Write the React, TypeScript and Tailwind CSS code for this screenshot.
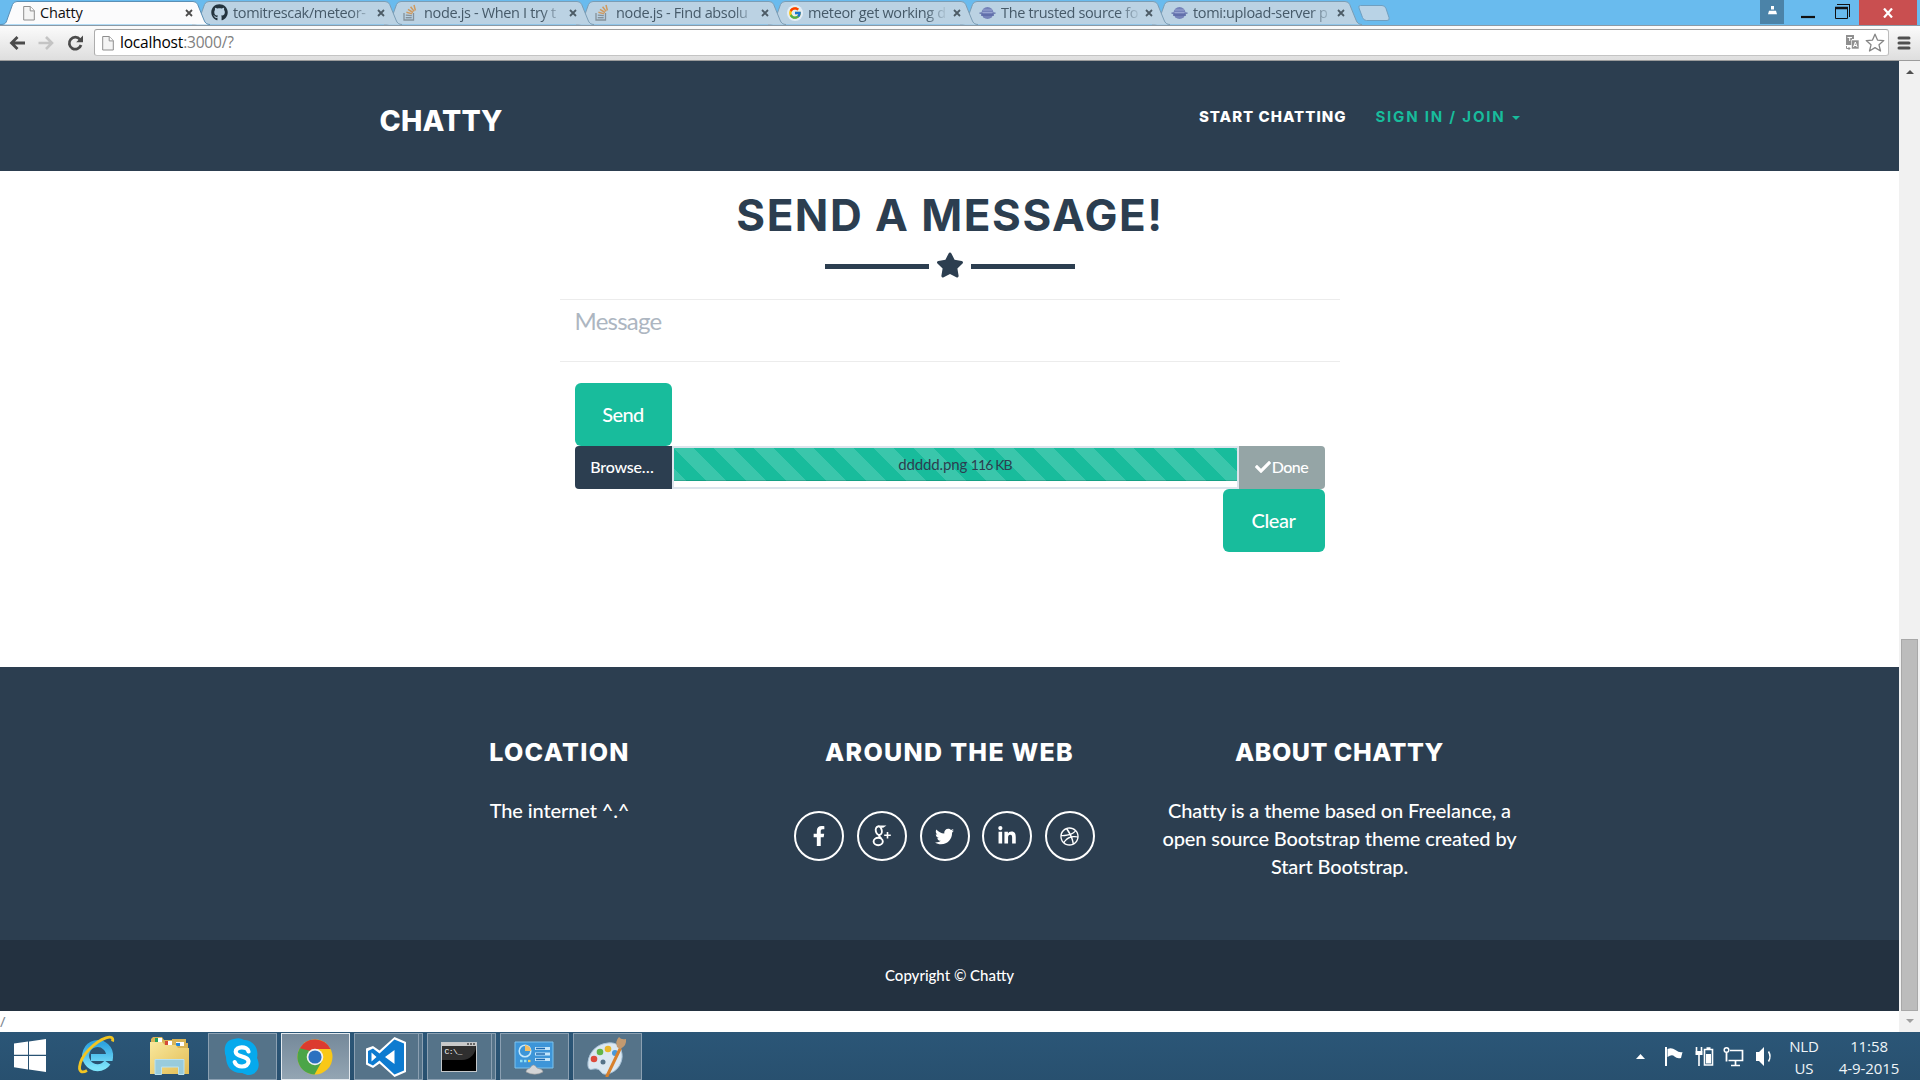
import React from "react";
import { FaCheck, FaDribbble, FaFacebookF, FaGithub, FaLinkedinIn, FaStar, FaTwitter } from "react-icons/fa";
import { FcGoogle } from "react-icons/fc";

const ui = "font-['Open_Sans',sans-serif]";
const heading = "font-['Inter',sans-serif] font-extrabold uppercase whitespace-nowrap";

function PageIcon() {
  return (
    <svg width="12" height="16" viewBox="0 0 12 16" className="shrink-0">
      <path d="M.7 1.5h6.6l4 4.2v9.3H.7z" fill="#f4f4f4" stroke="#8e8e8e" />
      <path d="M7.2 1.5v4.4h4" fill="#fff" stroke="#8e8e8e" />
    </svg>
  );
}

function StackIcon() {
  return (
    <svg width="14" height="17" viewBox="0 0 14 17" fill="none" className="mr-[2px] shrink-0">
      <path d="M1 9v7h9.500V9" stroke="#84919b" strokeWidth="1.300" />
      <path d="M2.700 13.700h6" stroke="#84919b" strokeWidth="1.400" />
      <path d="M2.800 11.200l6 .4" stroke="#84919b" strokeWidth="1.300" />
      <path d="M3.400 8.300l5.800 1.600M5 5.300l5 3.200M7.600 2.700l3.500 4.700M11 1l1.400 5.500" stroke="#cf9a5f" strokeWidth="1.500" />
    </svg>
  );
}

function AtmosphereIcon() {
  return (
    <svg width="17" height="14" viewBox="0 0 17 14" className="shrink-0">
      <circle cx="8.500" cy="7" r="6" fill="#7482b9" />
      <path d="M4 4h9M3 6.500h11" stroke="#98a4d1" />
      <path d="M.5 7.200h3M13.500 7.200h3M2 9h13" stroke="#5c6aa6" strokeWidth="1.300" />
    </svg>
  );
}

const tabs = [
  { title: "Chatty", icon: <PageIcon /> },
  { title: "tomitrescak/meteor-", icon: <FaGithub size={17} color="#24343f" className="shrink-0" /> },
  { title: "node.js - When I try t", icon: <StackIcon /> },
  { title: "node.js - Find absolu", icon: <StackIcon /> },
  { title: "meteor get working d", icon: <span className="shrink-0 rounded-full bg-[#e3edf5] p-px"><FcGoogle size={14} /></span> },
  { title: "The trusted source fo", icon: <AtmosphereIcon /> },
  { title: "tomi:upload-server p", icon: <AtmosphereIcon /> },
];

const depth = ["z-[7]", "z-[6]", "z-[5]", "z-[4]", "z-[3]", "z-[2]", "z-[1]"];

function Tab({ index }: { index: number }) {
  const active = index === 0;
  const { title, icon } = tabs[index];
  return (
    <div className={`relative h-[25px] w-[192px] shrink-0 ${depth[index]}`}>
      <svg width="212" height="25" viewBox="0 0 212 25" className="absolute left-0 top-0">
        <path
          d="M0 24.500C6 24.500 6 23 8 17L12.500 4.500Q13.800 1.500 17 1.500H193Q196.500 1.500 197.700 4.500L204 20Q205.500 24.500 210 24.500"
          fill={active ? "#fbfbfc" : "#bbd2e3"}
          stroke={active ? "#5b8fb5" : "#7b9db5"}
        />
      </svg>
      <div className={`relative flex h-[25px] items-center ${active ? "pl-[23px]" : "pl-[19px]"}`}>
        {icon}
        <div
          className={`ml-[5px] whitespace-nowrap text-[14.500px] leading-[22px] ${ui} ${active ? "tracking-[-0.2px] text-[#111]" : "w-[140px] tracking-[-0.35px] text-[#465a69] [mask-image:linear-gradient(90deg,#000_84%,transparent_100%)]"}`}
        >
          {title}
        </div>
      </div>
      <svg width="8" height="8" viewBox="0 0 8 8" className="absolute left-[185px] top-[9px]">
        <path d="M1 1l6 6M7 1L1 7" stroke={active ? "#4c4c4c" : "#4c5b66"} strokeWidth="1.800" />
      </svg>
    </div>
  );
}

function TitleBar() {
  return (
    <div className="flex h-[25px] bg-[#69bbee]">
      {tabs.map((t, i) => (
        <Tab key={t.title} index={i} />
      ))}
      <svg width="36" height="25" viewBox="0 0 36 25" className="ml-[13px] mr-auto">
        <path d="M3.500 5.500H25q3 0 4 3l3 9q1 3-2 3H9.500q-3 0-4-3L2 8q-1-2.500 1.500-2.500z" fill="#b9d3e6" stroke="#6f9fc0" />
      </svg>
      <div className="flex h-[24px] w-[24px] justify-center bg-[#4b83a8] pt-[6px]">
        <svg width="9" height="9" viewBox="0 0 9 9" fill="#fff">
          <path d="M3 0h3v3.500H3zM1 4.700h7l1 3.600H0z" />
        </svg>
      </div>
      <svg width="75" height="24" viewBox="0 0 75 24" fill="none" stroke="#111">
        <path d="M17 17h14" strokeWidth="2.200" />
        <path d="M51.500 7.500h12v11h-12z" />
        <path d="M51 8h13" strokeWidth="2.500" />
        <path d="M53.500 5V4.500h12V17M53 4.500h13" />
      </svg>
      <div className="flex h-[25px] w-[58px] items-center justify-center bg-[#c94f50]">
        <svg width="10" height="10" viewBox="0 0 10 10">
          <path d="M1 0.500l8 9M9 .5l-8 9" stroke="#fff" strokeWidth="2.200" />
        </svg>
      </div>
      <div className="w-[3px]" />
    </div>
  );
}

function Toolbar() {
  return (
    <div className="flex h-[36px] items-center border-b border-t border-b-[#9c9c9c] border-t-[#8b9aa6] bg-linear-to-b from-[#fbfbfb] to-[#dedede] pb-px">
      <svg width="94" height="34" viewBox="0 0 94 34" fill="none" className="shrink-0">
        <path d="M25 17H12M17.500 11l-6 6 6 6" stroke="#4b4b4b" strokeWidth="2.800" />
        <path d="M38.500 17h13M46 11l6 6-6 6" stroke="#c4c4c4" strokeWidth="2.600" />
        <path d="M80 13.500A6 6 0 1 0 81 19" stroke="#4b4b4b" strokeWidth="2.700" />
        <path d="M83 9.500v6.800h-6.800z" fill="#4b4b4b" />
      </svg>
      <div className="flex h-[27px] w-[1795px] items-center rounded-[3px] border border-b-[#c4c4c4] border-l-[#adadad] border-r-[#bcbcbc] border-t-[#9f9f9f] bg-white pl-[7px] pr-[3px]">
        <PageIcon />
        <div className={`ml-[6px] pb-px text-[15.500px] leading-[22px] tracking-[-0.2px] text-[#808080] ${ui}`}>
          <span className="text-black">localhost</span>:3000/?
        </div>
        <svg width="15" height="15" viewBox="0 0 15 15" className="ml-auto">
          <path d="M1 0h8v4H7v6H1z" fill="#8f8f8f" />
          <path d="M6.500 5H14v9H6.500z" fill="#8f8f8f" stroke="#fff" strokeWidth=".6" />
          <path d="M2.500 2.500h4.500M4.700 2.500V6" stroke="#fff" />
          <path d="M8.500 12l1.800-5 1.800 5M9 10.500h2.700" stroke="#fff" fill="none" />
          <path d="M1.500 11v2.500H5M3.500 12l1.500 1.500L3.500 15" stroke="#8f8f8f" fill="none" />
        </svg>
        <svg width="20" height="19" viewBox="0 0 20 19" className="ml-[5px]">
          <path d="M10 1.200l2.500 5.900 6.300.5-4.800 4.200 1.500 6.200-5.500-3.400L4.500 18 6 11.800 1.200 7.600l6.300-.5z" fill="#fff" stroke="#858585" strokeWidth="1.300" strokeLinejoin="round" />
        </svg>
      </div>
      <svg width="14" height="14" viewBox="0 0 14 14" className="ml-[8px]">
        <path d="M2 2h10M2 7h10M2 12h10" stroke="#505050" strokeWidth="3" strokeLinecap="round" />
      </svg>
    </div>
  );
}

function GooglePlusGlyph() {
  return (
    <svg width="20" height="22" viewBox="0 0 20 22" fill="none" stroke="#fff">
      <ellipse cx="6.800" cy="5.700" rx="3" ry="4.300" strokeWidth="1.900" transform="rotate(-12 6.800 5.700)" />
      <path d="M6 1.100h6.500l-1.500 1H9" strokeWidth="1.200" />
      <path d="M7.500 9.900c-1 1.300.2 2.200 1.600 3.400" strokeWidth="2.100" />
      <ellipse cx="6.200" cy="16.500" rx="4.600" ry="3.700" strokeWidth="1.900" />
      <path d="M15.500 7v6.600M12.200 10.300h6.600" strokeWidth="1.600" />
    </svg>
  );
}

function Social({ children }: { children: React.ReactNode }) {
  return <a className="flex h-[50px] w-[50px] items-center justify-center rounded-full border-2 border-white text-white">{children}</a>;
}

function SiteHeader() {
  return (
    <header className="flex h-[110px] justify-center bg-[#2c3e50]">
      <div className="flex w-[1140px] justify-between">
        <div className={`${heading} pt-[42px] text-[28.500px] leading-[36px] tracking-[0.2px] text-white`}>Chatty</div>
        <nav className="flex pt-[45px] text-[15px] leading-[21px]">
          <a className={`${heading} mr-[29px] tracking-[1px] text-white`}>Start Chatting</a>
          <a className={`${heading} tracking-[1.800px] text-[#18bc9c] !font-bold`}>Sign in / Join</a>
          <span className="ml-[6px] mt-[10px] h-0 w-0 border-x-4 border-t-4 border-x-transparent border-t-[#18bc9c]" />
        </nav>
      </div>
    </header>
  );
}

function MessageSection() {
  return (
    <section className="flex h-[496px] flex-col items-center bg-white">
      <h2 className={`${heading} mt-[17px] h-[54px] pl-px text-[44px] !font-bold leading-[54px] tracking-[1.500px] text-[#2c3e50]`}>Send a message!</h2>
      <div className="mt-[9px] flex h-[28px] items-center gap-[7px] text-[#2c3e50]">
        <div className="mt-[3px] h-[5px] w-[104px] bg-[#2c3e50]" />
        <FaStar size={28} />
        <div className="mt-[3px] h-[5px] w-[104px] bg-[#2c3e50]" />
      </div>
      <div className="mt-[20px] h-[63px] w-[780px] border-y border-[#ececec] pl-[15px] pt-[3px] font-['Lato',sans-serif] text-[24px] leading-[36px] tracking-[-0.75px] text-[#adb6c1]">
        Message
      </div>
      <div className="mt-[21px] flex w-[750px] flex-col font-['Lato',sans-serif] text-white">
        <button className="h-[63px] w-[97px] rounded-[6px] bg-[#18bc9c] pb-[2px] text-[20px] font-medium tracking-[-0.6px]">Send</button>
        <div className="flex h-[43px] w-full">
          <div className="flex w-[97px] items-center justify-center rounded-l-[4px] bg-[#2c3e50] pb-px pr-[2px] text-[16px] font-medium tracking-[-0.200px]">Browse…</div>
          <div className="flex-1 border-2 border-[#dce4ec]">
            <div className="flex h-[33px] items-center justify-center bg-[#18bc9c] bg-[linear-gradient(45deg,rgba(255,255,255,.15)_25%,transparent_25%,transparent_50%,rgba(255,255,255,.15)_50%,rgba(255,255,255,.15)_75%,transparent_75%)] bg-[length:40px_40px] text-[15px] tracking-[-0.15px] text-[#2c3e50] shadow-[inset_0_-1px_0_rgba(0,0,0,.15)]">
              ddddd.png&nbsp;<span className="text-[14px] tracking-[-0.900px]">116 KB</span>
            </div>
          </div>
          <div className="flex w-[86px] items-center justify-center gap-px rounded-r-[4px] bg-[#95a5a6] pb-px text-[16px] font-medium tracking-[-0.500px]">
            <FaCheck size={16} />
            Done
          </div>
        </div>
        <button className="h-[63px] w-[102px] self-end rounded-[6px] bg-[#18bc9c] pb-[2px] text-[20px] font-medium tracking-[-0.400px]">Clear</button>
      </div>
    </section>
  );
}

function SiteFooter() {
  const title = `${heading} text-[25px] leading-[30px]`;
  return (
    <footer className="text-center font-['Lato',sans-serif] text-white">
      <div className="flex h-[273px] justify-center bg-[#2c3e50] pt-[70px] text-[20px] font-medium leading-[28px] tracking-[-0.110px]">
        <div className="w-[390px]">
          <h3 className={`${title} tracking-[1.300px]`}>Location</h3>
          <p className="mt-[29px]">The internet ^.^</p>
        </div>
        <div className="w-[390px]">
          <h3 className={`${title} tracking-[1.300px]`}>Around the Web</h3>
          <div className="mt-[44px] flex justify-center gap-[12.700px] pr-[10px]">
            <Social><FaFacebookF size={20} /></Social>
            <Social><GooglePlusGlyph /></Social>
            <Social><FaTwitter size={19} /></Social>
            <Social><FaLinkedinIn size={20} /></Social>
            <Social><FaDribbble size={19} /></Social>
          </div>
        </div>
        <div className="w-[390px] px-[15px]">
          <h3 className={`${title} tracking-[0.500px]`}>About Chatty</h3>
          <p className="mt-[29px]">
            Chatty is a theme based on Freelance, a
            <br />
            open source Bootstrap theme created by
            <br />
            Start Bootstrap.
          </p>
        </div>
      </div>
      <div className="flex h-[71px] items-center justify-center bg-[#233140] text-[15px] font-medium">Copyright © Chatty</div>
      <div className={`h-[21px] bg-white text-left text-[15px] leading-[20px] text-[#7d8791] ${ui}`}>/</div>
    </footer>
  );
}

function Scrollbar() {
  return (
    <div className="flex w-[21px] flex-col items-center justify-between bg-[#f1f1f1]">
      <div className="mt-[9px] h-0 w-0 border-x-[4px] border-b-[4px] border-x-transparent border-b-[#505050]" />
      <div className="mb-[9px] flex flex-col items-center gap-[8px]">
        <div className="h-[372px] w-[17px] border border-[#a8a8a8] bg-[#bcbcbc]" />
        <div className="h-0 w-0 border-x-[4px] border-t-[4px] border-x-transparent border-t-[#a0a0a0]" />
      </div>
    </div>
  );
}

function TaskButton({ children, variant = "plain" }: { children: React.ReactNode; variant?: "plain" | "active" | "stack" }) {
  const look =
    variant === "active"
      ? "border-[#e3e9ee] bg-linear-to-b from-[#75899a] to-[#93a5b3]"
      : "border-[#8ba0b2] bg-[#557389]";
  return (
    <div className="mr-[4px] flex h-[47px] w-[69px]">
      <div className={`flex flex-1 items-center justify-center border pr-[2px] ${look}`}>{children}</div>
      {variant === "stack" && <div className="w-[4px] border-y border-r border-[#8ba0b2] bg-[#557389]" />}
    </div>
  );
}

function ChromeIcon() {
  return (
    <svg width="36" height="36" viewBox="0 0 36 36">
      <circle cx="18" cy="18" r="17.500" fill="#f9c817" />
      <path d="M18 18L2.800 9.200A17.500 17.500 0 0 0 17.500 35.500L25 22z" fill="#4ba547" />
      <path d="M18 18L2.800 9.300A17.500 17.500 0 0 1 33.500 10H18z" fill="#dc3b2f" />
      <path d="M2.800 9.300L10.500 22 14 12z" fill="#4ba547" />
      <circle cx="18" cy="18" r="8.300" fill="#f3f3f3" />
      <circle cx="18" cy="18" r="6.600" fill="#2c71c0" />
    </svg>
  );
}

function Taskbar() {
  return (
    <div className="flex h-[48px] items-start bg-linear-to-b from-[#2b5677] to-[#28506f]">
      <svg width="208" height="48" viewBox="0 0 208 48" className="shrink-0">
        <defs>
          <linearGradient id="ie" x1="0" y1="0" x2="0" y2="1">
            <stop offset="0" stopColor="#2fa4e0" />
            <stop offset="1" stopColor="#7de4fb" />
          </linearGradient>
          <linearGradient id="folder" x1="0" y1="0" x2="1" y2="1">
            <stop offset="0" stopColor="#f9e89d" />
            <stop offset="1" stopColor="#e2bd55" />
          </linearGradient>
        </defs>
        <path d="M14 11.500l14-2v13.300H14zM29 9.400l17-2.400v15.800H29zM14 24h14v13.500l-14-2.200zM29 24h17v16l-17-2.500z" fill="#fff" />
        <path d="M107.500 30.500A12 12 0 1 1 109.500 25.500H91" fill="none" stroke="url(#ie)" strokeWidth="7" />
        <path d="M87 38.500c-11 6-9.500-9 2-21S115 1 112.500 9.500" fill="none" stroke="#f2c522" strokeWidth="2.800" />
        <path d="M151 7l2-2h9l2 3h8V7h14v4h2v28h-37z" fill="#d9b456" />
        <path d="M155 6h7v5h-7zM165 9h7v4h-7zM176 10h8v4h-8z" fill="#fff" />
        <path d="M155 6h3v4h-3z" fill="#27a058" />
        <path d="M165 9h3v4h-3z" fill="#d64a35" />
        <path d="M176 11h4v3h-4z" fill="#2689d8" />
        <path d="M150 10h12l3 3h11l2 3h11v26h-39z" fill="url(#folder)" />
        <path d="M155 27.500h29v15h-5.500v-7.500h-17v7.500H155z" fill="#8fcbe8" fillOpacity=".9" stroke="#b9e2f2" />
      </svg>
      <div className="flex pt-px">
        <TaskButton>
          <svg width="36" height="38" viewBox="0 0 36 38">
            <path d="M10 1C17-1 18 2 21 2c9 1 14 9 12 18 4 8 1 16-8 17-4 0-5-2-8-2C7 35 2 28 2 19-1 11 1 2 10 1z" fill="#06a9ec" />
            <path d="M24.500 13.500C23.500 7.800 11.500 8 11.700 13.800c.2 6 12.800 3.400 12.800 9.800 0 6.200-12.200 6.700-13.800.5" fill="none" stroke="#fff" strokeWidth="4.200" strokeLinecap="round" />
          </svg>
        </TaskButton>
        <TaskButton variant="active"><ChromeIcon /></TaskButton>
        <TaskButton variant="stack">
          <svg width="40" height="40" viewBox="0 0 40 40">
            <path d="M28.500 0L40 5v30l-11.500 5L13.500 26.500 7 31l-7-3.500v-16L7 9l6.500 4.500z" fill="#fff" />
            <path d="M28.500 2.500L38 6.500v27l-9.500 4L13.500 23.500 7 28.500l-5-2.500V14l5-2.500 6.500 5z" fill="#0d7bd0" />
            <path d="M28.500 13l-9.500 7 9.500 7zM5.500 15.500v9l5-4.500z" fill="#fff" />
          </svg>
        </TaskButton>
        <TaskButton variant="stack">
          <div className="h-[30px] w-[36px] border border-[#c4c8cb] bg-black">
            <div className="flex h-[3px] justify-end gap-px bg-[#c9c9c9] pr-px">
              <span className="h-[2px] w-[2px] bg-[#666]" />
              <span className="h-[2px] w-[2px] bg-[#666]" />
              <span className="h-[2px] w-[2px] bg-[#666]" />
            </div>
            <div className="h-[14px] rounded-br-full bg-[#2f2f2f] pl-[3px] pt-px font-['Liberation_Mono',monospace] text-[8px] leading-[10px] tracking-[-0.5px] text-white">C:\_</div>
          </div>
        </TaskButton>
        <TaskButton>
          <svg width="40" height="36" viewBox="0 0 40 36">
            <path d="M1 3h38v26H1z" fill="#3d95d8" stroke="#7cc3ee" />
            <circle cx="11" cy="12" r="5.800" fill="none" stroke="#c4e7fb" strokeWidth="1.500" />
            <path d="M11 12V6a6 6 0 0 1 6 6z" fill="#f2bd64" />
            <path d="M21 9.500h15M21 15h15M21 20.500h15" stroke="#c4e6fb" strokeWidth="3.200" />
            <path d="M22 9.500h9M22 15h9M22 20.500h9" stroke="#1e6ab0" strokeWidth="1.500" />
            <path d="M6 22h2.500M10 22h2.500" stroke="#8fe0f5" strokeWidth="2.300" />
            <path d="M14 22h2.500" stroke="#f4cd55" strokeWidth="2.300" />
            <path d="M12 33q0-3 4-4 3.500-6 7 0 6 1 6 4-8 4.500-17 0z" fill="#d3d5d7" stroke="#999" strokeWidth=".6" />
          </svg>
        </TaskButton>
        <TaskButton>
          <svg width="42" height="40" viewBox="0 0 42 40">
            <path d="M22 6C9 7 1 18 2 29c1 6 5 2 9 3 5 1 3 6 10 5 11-2 16-12 15-20C35 9 30 5 22 6z" fill="#dbe8f2" stroke="#a8c3d8" />
            <circle cx="8" cy="22" r="3.300" fill="#dc4b3d" />
            <circle cx="14" cy="15" r="3.300" fill="#62b548" />
            <circle cx="22" cy="12" r="3.300" fill="#eab72a" />
            <circle cx="29" cy="16" r="3" fill="#4b98d7" />
            <circle cx="17" cy="25" r="2.500" fill="#557389" />
            <path d="M34 12L21 39" stroke="#d8812d" strokeWidth="3" strokeLinecap="round" />
            <path d="M31 10q-2-6 2-10 2 3 7 2 1 7-6 10z" fill="#c39a70" />
          </svg>
        </TaskButton>
      </div>
      <svg width="150" height="48" viewBox="0 0 150 48" fill="none" stroke="#fff" className="ml-auto">
        <path d="M6 27l4.500-5 4.500 5z" fill="#fff" stroke="none" />
        <path d="M36 15v19" strokeWidth="2" />
        <path d="M37.500 17q4-2 8 1t7 2l-1.500 6q-4 1-6.500-1.500T37.500 25z" fill="#fff" stroke="none" />
        <path d="M66.500 15v4M71.500 15v4M69 23v11" strokeWidth="1.600" />
        <path d="M65.500 19h7v4h-7z" fill="#fff" stroke="none" />
        <path d="M74.500 17.500h8v15.500h-8zM76.500 16h4" strokeWidth="1.600" />
        <path d="M76 22h5v9.500h-5z" fill="#fff" stroke="none" />
        <path d="M100 18.500h12.500v10H98.500M105.500 29v4M101 33.500h9" strokeWidth="1.700" />
        <circle cx="96.500" cy="18" r="2.300" strokeWidth="1.500" />
        <path d="M96.500 20.500v9" strokeWidth="1.800" />
        <path d="M126 20h3l5-5v19l-5-5h-3z" fill="#fff" stroke="none" />
        <path d="M138.500 19.500q3 5 0 10" strokeWidth="1.500" />
      </svg>
      <div className={`flex pt-[3px] text-center text-[15px] leading-[22px] tracking-[-0.1px] text-[#f0f5f8] ${ui}`}>
        <div className="w-[48px]">NLD<br />US</div>
        <div className="mr-[16px] w-[76px] pl-[6px]">11:58<br />4-9-2015</div>
      </div>
    </div>
  );
}

export default function App() {
  return (
    <div className="flex h-[1080px] w-[1920px] flex-col overflow-hidden">
      <TitleBar />
      <Toolbar />
      <div className="flex h-[971px]">
        <main className="flex w-[1899px] flex-col">
          <SiteHeader />
          <MessageSection />
          <SiteFooter />
        </main>
        <Scrollbar />
      </div>
      <Taskbar />
    </div>
  );
}
